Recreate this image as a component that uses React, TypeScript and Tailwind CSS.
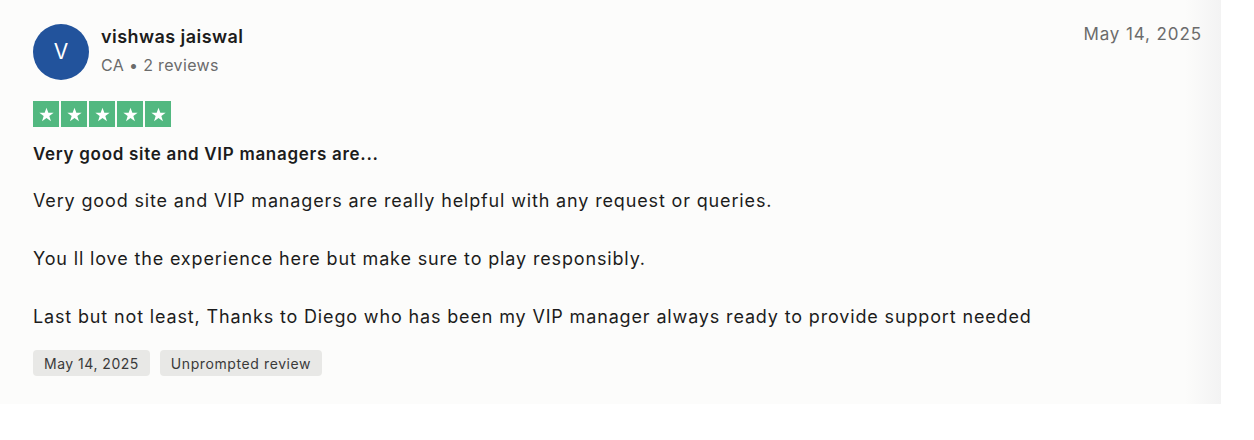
import React from 'react';

function Stars() {
  return (
    <div className="flex gap-[2px]">
      {[0, 1, 2, 3, 4].map((i) => (
        <div key={i} className="w-[26px] h-[26px] bg-[#52b880] flex items-center justify-center">
          <svg viewBox="0 0 24 24" className="w-[17px] h-[17px]" fill="#ffffff">
            <path d="M12 2.5l2.6 7.1h7.5l-6.1 4.5 2.3 7.3L12 17l-6.3 4.4 2.3-7.3-6.1-4.5h7.5z" />
          </svg>
        </div>
      ))}
    </div>
  );
}

export default function App() {
  return (
    <div className="w-[1254px] h-[440px] bg-white" style={{ fontFamily: 'Inter, "Liberation Sans", sans-serif' }}>
      <div className="w-[1221px] h-[404px] bg-[#fcfcfb] relative pl-[33px] pr-[20px] pt-[22px]">
        <div className="absolute right-0 top-0 h-full w-[36px] bg-gradient-to-r from-[#fcfcfb] to-[#f3f3f3]" />
        <div className="flex items-start justify-between relative">
          <div className="flex items-center gap-3 mt-[2px]">
            <div className="w-[56px] h-[56px] rounded-full bg-[#22539c] flex items-center justify-center text-white text-[21px]">
              V
            </div>
            <div className="flex flex-col mt-[-2px]">
              <span className="text-[18px] font-semibold text-[#1c1c1c] leading-[24px] tracking-[0.45px]">vishwas jaiswal</span>
              <span className="text-[16px] text-[#6b6b6b] leading-[24px] mt-[4px] tracking-[0.35px]">CA • 2 reviews</span>
            </div>
          </div>
          <span className="text-[17px] text-[#6b6b6b] tracking-[0.9px] mr-[-1px]">May 14, 2025</span>
        </div>
        <div className="mt-[21px] relative">
          <Stars />
        </div>
        <div className="mt-[15px] text-[17px] font-semibold text-[#1c1c1c] leading-[24px] tracking-[0.7px]">
          Very good site and VIP managers are...
        </div>
        <div className="mt-[21px] text-[18px] text-[#1c1c1c] leading-[28px] tracking-[0.85px] flex flex-col gap-[30px]">
          <p>Very good site and VIP managers are really helpful with any request or queries.</p>
          <p>You ll love the experience here but make sure to play responsibly.</p>
          <p>Last but not least, Thanks to Diego who has been my VIP manager always ready to provide support needed</p>
        </div>
        <div className="mt-[19px] flex gap-[10px]">
          <span className="px-[11px] h-[26px] flex items-center rounded bg-[#e8e8e6] text-[14px] text-[#3a3a3a] tracking-[0.5px]">May 14, 2025</span>
          <span className="px-[11px] h-[26px] flex items-center rounded bg-[#e8e8e6] text-[14px] text-[#3a3a3a] tracking-[0.6px]">Unprompted review</span>
        </div>
      </div>
    </div>
  );
}
